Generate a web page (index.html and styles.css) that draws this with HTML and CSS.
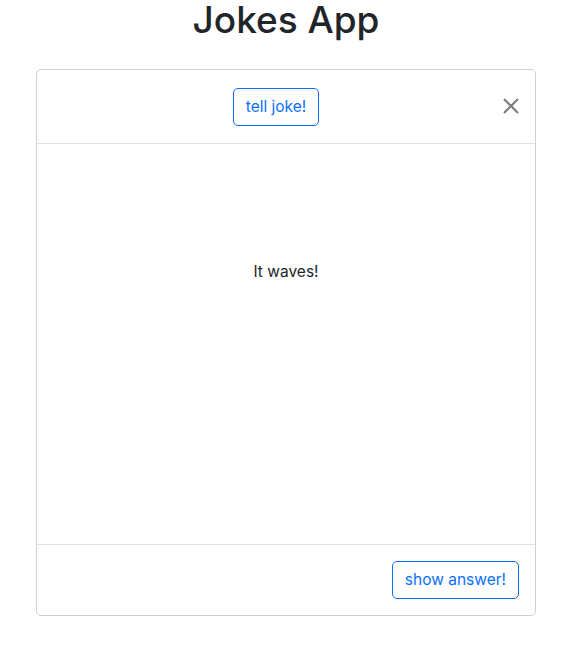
FILE: index.html
```html
<!DOCTYPE html>
<html>
<head>
<meta charset="utf-8">
<link rel="stylesheet" href="styles.css">
</head>
<body>
<div class="app">
  <h1 class="title">Jokes App</h1>
  <div class="card">
    <div class="card-header">
      <button class="btn btn-tell">tell joke!</button>
      <button class="close" aria-label="close">
        <svg width="16" height="16" viewBox="0 0 16 16"><path d="M1 1L15 15M15 1L1 15" stroke="#7a7a7a" stroke-width="2" fill="none"/></svg>
      </button>
    </div>
    <div class="card-body">
      <p class="joke">It waves!</p>
    </div>
    <div class="card-footer">
      <button class="btn">show answer!</button>
    </div>
  </div>
</div>
</body>
</html>
```
FILE: styles.css
```css
* { box-sizing: border-box; }
body {
  margin: 0;
  font-family: Inter, "Noto Sans", sans-serif;
  color: #212529;
  background: #fff;
}
.app {
  width: 500px;
  margin-left: 36px;
}
.title {
  margin: 0;
  height: 69px;
  padding-top: 0;
  font-size: 37px;
  font-weight: 500;
  line-height: 40px;
  text-align: center;
  color: #212529;
}
.card {
  border: 1px solid #d0d0d0;
  border-radius: 5px;
  background: #fff;
}
.card-header {
  position: relative;
  height: 74px;
  display: flex;
  justify-content: center;
  align-items: center;
  padding-top: 1px;
  border-bottom: 1px solid #dee2e6;
}
.btn {
  font-family: inherit;
  font-size: 15.5px;
  line-height: 22px;
  padding: 7px 12px;
  height: 38px;
  color: #0d6efd;
  background: #fff;
  border: 1px solid #0d6efd;
  border-radius: 5px;
}
.btn-tell {
  margin-right: 20px;
}
.close {
  position: absolute;
  right: 16px;
  top: 28px;
  width: 16px;
  height: 16px;
  padding: 0;
  border: 0;
  background: none;
  display: flex;
}
.card-body {
  height: 400px;
  padding-top: 117px;
}
.joke {
  margin: 0;
  text-align: center;
  font-size: 15.5px;
  line-height: 22px;
}
.card-footer {
  height: 71px;
  display: flex;
  justify-content: flex-end;
  align-items: center;
  padding: 0 16px;
  border-top: 1px solid #dee2e6;
}
```
